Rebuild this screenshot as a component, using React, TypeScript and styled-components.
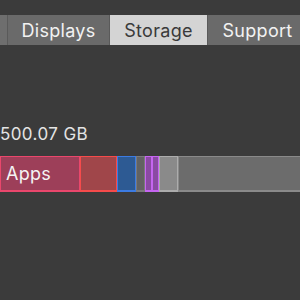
import styled, { createGlobalStyle } from "styled-components";

const GlobalStyle = createGlobalStyle`
  html, body {
    margin: 0;
    padding: 0;
    background: #3b3b3b;
  }
  body {
    font-family: Inter, "Liberation Sans", sans-serif;
    -webkit-font-smoothing: antialiased;
  }
`;

const Page = styled.div`
  width: 300px;
  height: 300px;
  overflow: hidden;
  background: #3b3b3b;
  display: flex;
  flex-direction: column;
`;

const TabBar = styled.div`
  margin-top: 15px;
  height: 30px;
  display: flex;
  flex-wrap: nowrap;
  background: #6a6a6a;
`;

const Tab = styled.div<{ $width: number; $active?: boolean }>`
  flex: 0 0 ${({ $width }) => $width}px;
  box-sizing: border-box;
  display: flex;
  align-items: center;
  justify-content: center;
  padding-top: 1px;
  font-size: 18px;
  letter-spacing: 0.3px;
  color: ${({ $active }) => ($active ? "#3a3a3a" : "#f2f2f2")};
  background: ${({ $active }) => ($active ? "#d4d4d4" : "#6a6a6a")};
  border-left: 1px solid #5a5a5a;
  white-space: nowrap;
`;

const TabStub = styled.div`
  flex: 0 0 7px;
  background: #6e6e6e;
`;

const Capacity = styled.div`
  margin-top: 78px;
  font-size: 17px;
  letter-spacing: 0.4px;
  color: #e4e4e4;
  line-height: 22px;
  white-space: nowrap;
`;

const Bar = styled.div`
  margin-top: 11px;
  height: 36px;
  display: flex;
  flex-wrap: nowrap;
`;

const Segment = styled.div<{ $width: number; $fill: string; $edge: string }>`
  flex: 0 0 ${({ $width }) => $width}px;
  box-sizing: border-box;
  height: 100%;
  background: ${({ $fill }) => $fill};
  border: 1px solid ${({ $edge }) => $edge};
  border-bottom-width: 2px;
  display: flex;
  align-items: center;
  padding-left: 5px;
  font-size: 18px;
  letter-spacing: 0.3px;
  color: #f4f4f4;
  white-space: nowrap;
  overflow: hidden;
`;

const segments = [
  { label: "Apps", width: 80, fill: "#9d3f59", edge: "#ea476c" },
  { label: "", width: 37, fill: "#a0464a", edge: "#f64b4b" },
  { label: "", width: 19, fill: "#2d5a93", edge: "#3c7be2" },
  { label: "", width: 9, fill: "#626262", edge: "#7a7a7a" },
  { label: "", width: 7, fill: "#8a4aa3", edge: "#c565f0" },
  { label: "", width: 6, fill: "#8a4aa3", edge: "#c565f0" },
  { label: "", width: 19, fill: "#8a8a8a", edge: "#acacac" },
  { label: "", width: 123, fill: "#6c6c6c", edge: "#8a8a8a" },
];

export default function App() {
  return (
    <>
      <GlobalStyle />
      <Page>
        <TabBar>
          <TabStub />
          <Tab $width={102}>Displays</Tab>
          <Tab $width={98} $active>
            Storage
          </Tab>
          <Tab $width={100}>Support</Tab>
        </TabBar>
        <Capacity>500.07 GB</Capacity>
        <Bar>
          {segments.map((s, i) => (
            <Segment key={i} $width={s.width} $fill={s.fill} $edge={s.edge}>
              {s.label}
            </Segment>
          ))}
        </Bar>
      </Page>
    </>
  );
}
